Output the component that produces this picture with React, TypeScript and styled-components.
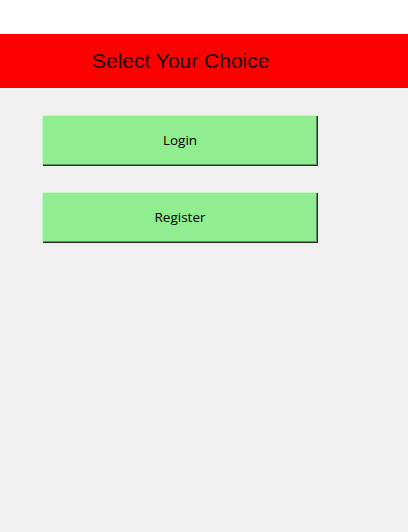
import React from "react";
import styled, { createGlobalStyle } from "styled-components";

const GlobalStyle = createGlobalStyle`
  html, body {
    margin: 0;
    padding: 0;
    background: #f0f0f0;
  }
  body {
    font-family: "Liberation Sans", Arial, sans-serif;
  }
`;

const Window = styled.div`
  width: 408px;
  height: 532px;
  display: flex;
  flex-direction: column;
  background: #f0f0f0;
`;

const TopStrip = styled.div`
  height: 34px;
  background: #ffffff;
`;

const Header = styled.div`
  height: 54px;
  background: #ff0000;
  display: flex;
  align-items: center;
  padding-left: 92px;
`;

const Title = styled.h1`
  margin: 0;
  font-family: "Liberation Sans", Arial, sans-serif;
  font-weight: normal;
  font-size: 21px;
  color: #110000;
`;

const Menu = styled.div`
  display: flex;
  flex-direction: column;
  gap: 26px;
  padding: 27px 0 0 42px;
`;

const ChoiceButton = styled.button`
  width: 276px;
  height: 51px;
  margin: 0;
  padding: 0 0 1px;
  border: none;
  background: #90ee90;
  box-shadow:
    inset 1px 1px 0 #c8f7c8,
    inset -1px -1px 0 #2e2e2e,
    inset -2px -2px 0 #5f8f5f;
  font-family: "Open Sans", "Noto Sans", sans-serif;
  font-size: 13.5px;
  color: #000;
  cursor: pointer;
`;

export default function App() {
  return (
    <>
      <GlobalStyle />
      <Window>
        <TopStrip />
        <Header>
          <Title>Select Your Choice</Title>
        </Header>
        <Menu>
          <ChoiceButton>Login</ChoiceButton>
          <ChoiceButton>Register</ChoiceButton>
        </Menu>
      </Window>
    </>
  );
}
